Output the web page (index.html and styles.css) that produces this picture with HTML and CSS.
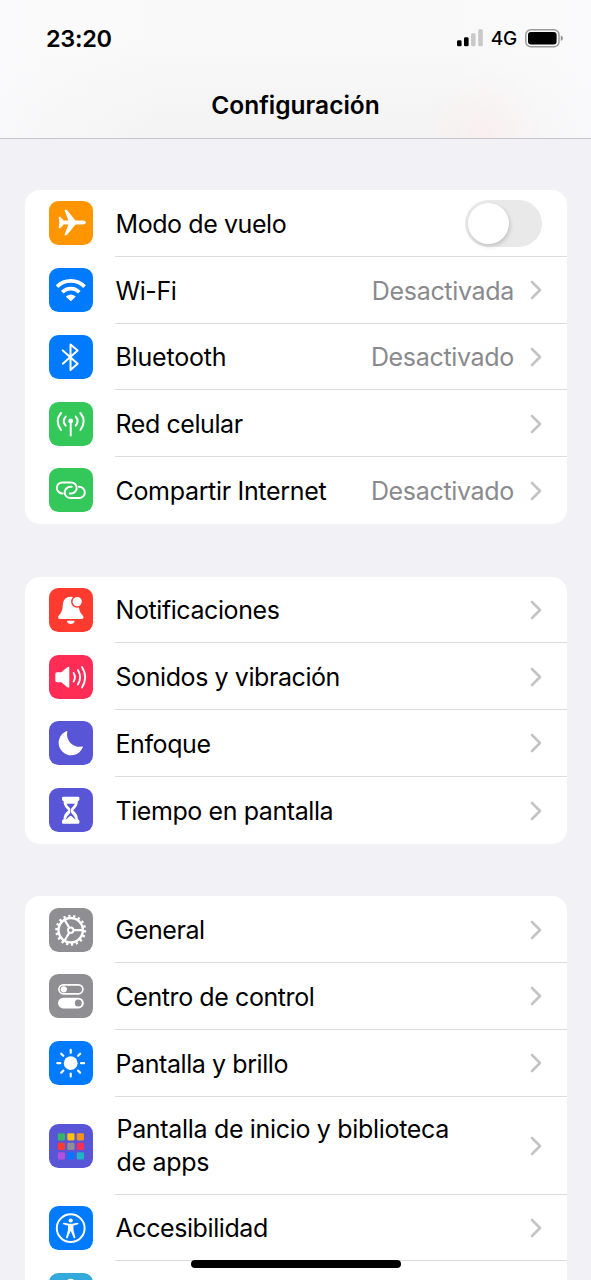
FILE: index.html
```html
<!DOCTYPE html>
<html lang="es">
<head>
<meta charset="utf-8">
<title>Configuración</title>
<link rel="stylesheet" href="styles.css">
</head>
<body>
<div class="screen">
  <header class="header">
    <div class="status">
      <span class="time">23:20</span>
      <div class="status-right">
        <svg class="signal" width="26" height="18" viewBox="0 0 26 18"><rect x="0" y="11.3" width="4.6" height="6" rx="1.4"/><rect x="7" y="8.3" width="4.6" height="9" rx="1.4"/><rect class="dim" x="14" y="4.3" width="4.6" height="13" rx="1.4"/><rect class="dim" x="21.2" y="0.3" width="4.6" height="17" rx="1.4"/></svg>
        <span class="net">4G</span>
        <svg width="39" height="19" viewBox="0 0 39 19"><rect x=".8" y=".8" width="33.2" height="17" rx="5" fill="none" stroke="#9b9b9b" stroke-width="1.5"/><rect x="3" y="3" width="28.6" height="12.6" rx="3" fill="#000"/><path d="M35.8 6.6q2 .8 2 2.7t-2 2.7z" fill="#8e8e8e"/></svg>
      </div>
    </div>
    <h1 class="title">Configuración</h1>
  </header>

  <main class="groups">
    <section class="card">
      <div class="row">
        <svg class="tile orange" viewBox="0 0 44 44"><path fill="#fff" d="M37 21.5c0 1.3-1.6 2-3.4 2h-7.1L18.2 33.8q-.4.5-1 .5h-1.100q-.8 0-.5-.9l3.800-9.900h-4.800l-2.700 3.300q-.3.4-.8.4h-.9q-.6 0-.6-.6l.9-5.100-.9-5.100q0-.6.6-.6h.9q.5 0 .8.4l2.700 3.300h4.800l-3.800-9.900q-.3-.9.5-.9h1.100q.6 0 1 .5l8.300 10.300h7.100c1.800 0 3.400.7 3.400 2z"/></svg>
        <div class="body"><span class="label">Modo de vuelo</span><span class="switch"><i class="knob"></i></span></div>
      </div>
      <div class="row">
        <svg class="tile blue" viewBox="0 0 44 44"><g fill="none" stroke="#fff" stroke-width="3.700"><path d="M8 18.600a19.400 19.400 0 0 1 27.600 0M13.300 24.200a11.700 11.700 0 0 1 17 0"/></g><path fill="#fff" d="M17.200 28.300q4.600-3.800 9.200 0 .4.4 0 .8L22.400 32.700q-.6.5-1.200 0L17.200 29.100q-.4-.4 0-.8z"/></svg>
        <div class="body"><span class="label">Wi-Fi</span><span class="value">Desactivada</span><svg class="chev" viewBox="0 0 12 20"><path d="M2 2l8 8-8 8"/></svg></div>
      </div>
      <div class="row">
        <svg class="tile blue" viewBox="0 0 44 44"><path fill="none" stroke="#fff" stroke-width="2" stroke-linejoin="round" stroke-linecap="round" d="M13.800 15.400L28.600 28.700 21.500 35V9.400l7.100 6-14.800 13.300"/></svg>
        <div class="body"><span class="label blt">Bluetooth</span><span class="value">Desactivado</span><svg class="chev" viewBox="0 0 12 20"><path d="M2 2l8 8-8 8"/></svg></div>
      </div>
      <div class="row">
        <svg class="tile green" viewBox="0 0 44 44"><g fill="none" stroke="#fff" stroke-width="2" stroke-linecap="round"><path d="M21.700 19.500v14M16.700 14.600q-3.800 4.400 0 9M26.700 14.600q3.800 4.400 0 9M12 11q-6.600 8 0 17M31.400 11q6.600 8 0 17"/></g><circle cx="21.700" cy="19" r="2.400" fill="#fff"/></svg>
        <div class="body"><span class="label">Red celular</span><svg class="chev" viewBox="0 0 12 20"><path d="M2 2l8 8-8 8"/></svg></div>
      </div>
      <div class="row">
        <svg class="tile green" viewBox="0 0 44 44"><g fill="none" stroke="#fff" stroke-width="2" stroke-linecap="round"><path d="M13.700 25.400h-.4a5.500 5.500 0 0 1 0-11h8.900a5.500 5.500 0 0 1 0 11h-1.400"/><path d="M29.800 18.800h.4a5.600 5.600 0 0 1 0 11.200h-8.900a5.600 5.600 0 0 1 0-11.200h1.400"/></g></svg>
        <div class="body"><span class="label wide">Compartir Internet</span><span class="value">Desactivado</span><svg class="chev" viewBox="0 0 12 20"><path d="M2 2l8 8-8 8"/></svg></div>
      </div>
    </section>

    <section class="card">
      <div class="row">
        <svg class="tile red" viewBox="0 0 44 44"><path fill="#fff" d="M21.800 8.800c-5 0-7.700 3.500-8 8.200-.3 4.500-.8 6.800-3.400 9.800-.9 1-1.300 1.700-1.300 2.500 0 1 .7 1.600 1.800 1.600h21.800c1.100 0 1.800-.6 1.800-1.600 0-.8-.4-1.500-1.300-2.500-2.600-3-3.100-5.300-3.400-9.800-.3-4.700-3-8.200-8-8.200zM17.900 32.800h7.800q-.7 3.200-3.900 3.200t-3.900-3.200z"/><circle cx="28.200" cy="13.600" r="5.400" fill="#fff" stroke="#ff3b30" stroke-width="1.500"/></svg>
        <div class="body"><span class="label">Notificaciones</span><svg class="chev" viewBox="0 0 12 20"><path d="M2 2l8 8-8 8"/></svg></div>
      </div>
      <div class="row">
        <svg class="tile pink" viewBox="0 0 44 44"><path fill="#fff" d="M8 17.200h4.300l6-5q2-1.300 2 .8v18.400q0 2.100-2 .8l-6-5H8q-1.700 0-1.700-1.700v-6.600q0-1.700 1.700-1.700z"/><g fill="none" stroke="#fff" stroke-width="1.900" stroke-linecap="round"><path d="M24.600 18q2.600 4.200 0 8.400M28.900 15q4.500 7.200 0 14.400M33 12q6.400 10.200 0 20.400"/></g></svg>
        <div class="body"><span class="label">Sonidos y vibración</span><svg class="chev" viewBox="0 0 12 20"><path d="M2 2l8 8-8 8"/></svg></div>
      </div>
      <div class="row">
        <svg class="tile indigo" viewBox="0 0 44 44"><path fill="#fff" d="M17.300 10.200q1.500-.5 1 .8A12.300 12.300 0 0 0 32.800 25.500q1.500-.4.9 1A12.500 12.500 0 1 1 17.300 10.200z"/></svg>
        <div class="body"><span class="label">Enfoque</span><svg class="chev" viewBox="0 0 12 20"><path d="M2 2l8 8-8 8"/></svg></div>
      </div>
      <div class="row">
        <svg class="tile indigo" viewBox="0 0 44 44"><path fill="#fff" fill-rule="evenodd" d="M14.200 8.700h15q1.200 0 1.200 1.300v1.600q0 1.200-1.500 1.400c0 4.300-1.800 6.400-4.800 9.200 3 2.800 4.800 4.900 4.800 9.200q1.500.2 1.500 1.400v1.600q0 1.300-1.200 1.300h-15q-1.200 0-1.200-1.300v-1.600q0-1.200 1.500-1.400c0-4.300 1.800-6.400 4.800-9.200-3-2.800-4.800-4.900-4.800-9.200Q13 12.800 13 11.600V10q0-1.300 1.200-1.300zM17.500 15.800h8.400q-.8 1.700-3.300 4.100-.6.600-.6 1.600v2q0 1.300.7 2 3.300 2.800 4 6-1.700-.9-3.900-3.200-1.100-1.100-2.200 0-2.200 2.300-3.900 3.200.7-3.200 4-6 .7-.7.7-2v-2q0-1-.6-1.600-2.500-2.400-3.300-4.100z"/></svg>
        <div class="body"><span class="label">Tiempo en pantalla</span><svg class="chev" viewBox="0 0 12 20"><path d="M2 2l8 8-8 8"/></svg></div>
      </div>
    </section>

    <section class="card">
      <div class="row">
        <svg class="tile gray" viewBox="0 0 44 44"><g fill="none" stroke="#fff"><circle cx="21.700" cy="22.200" r="12.200" stroke-width="2.400"/><circle cx="21.700" cy="22.200" r="14.200" stroke-width="2.600" pathLength="90" stroke-dasharray="2.300 2.700"/><circle cx="21.700" cy="22.200" r="2.700" stroke-width="1.900"/><path stroke-width="2.200" d="M24.500 22.200h9.500M20.300 19.800l-4.800-8.200M20.300 24.600l-4.800 8.200"/></g></svg>
        <div class="body"><span class="label">General</span><svg class="chev" viewBox="0 0 12 20"><path d="M2 2l8 8-8 8"/></svg></div>
      </div>
      <div class="row">
        <svg class="tile gray" viewBox="0 0 44 44"><rect x="9.900" y="10.800" width="24" height="9" rx="4.500" fill="none" stroke="#fff" stroke-width="1.700"/><circle cx="14.800" cy="15.300" r="3.100" fill="#fff"/><rect x="9" y="23.700" width="25.800" height="10.700" rx="5.300" fill="#fff"/><circle cx="29.300" cy="29" r="3.500" fill="#8e8e93"/></svg>
        <div class="body"><span class="label">Centro de control</span><svg class="chev" viewBox="0 0 12 20"><path d="M2 2l8 8-8 8"/></svg></div>
      </div>
      <div class="row">
        <svg class="tile blue" viewBox="0 0 44 44"><circle cx="21.700" cy="22.200" r="6.900" fill="#fff"/><path stroke="#fff" stroke-width="2.200" stroke-linecap="round" d="M21.700 8.800v3M21.700 32.600v3M8.300 22.200h3M32.100 22.200h3M12.200 12.700l2.100 2.100M29.100 29.600l2.100 2.100M31.200 12.700l-2.100 2.100M14.300 29.600l-2.100 2.100"/></svg>
        <div class="body"><span class="label">Pantalla y brillo</span><svg class="chev" viewBox="0 0 12 20"><path d="M2 2l8 8-8 8"/></svg></div>
      </div>
      <div class="row tall">
        <svg class="tile indigo" viewBox="0 0 44 44"><rect x="8.800" y="9.200" width="7.200" height="7.200" rx="1.300" fill="#34b567"/><rect x="18.300" y="9.200" width="7.200" height="7.200" rx="1.300" fill="#ffc20a"/><rect x="27.800" y="9.200" width="7.200" height="7.200" rx="1.300" fill="#f5921e"/><rect x="8.800" y="18.700" width="7.200" height="7.200" rx="1.300" fill="#ff3b30"/><rect x="18.300" y="18.700" width="7.200" height="7.200" rx="1.300" fill="#8e8e93"/><rect x="27.800" y="18.700" width="7.200" height="7.200" rx="1.300" fill="#fb2d55"/><rect x="8.800" y="28.200" width="7.200" height="7.200" rx="1.300" fill="#af52de"/><rect x="18.300" y="28.200" width="7.200" height="7.200" rx="1.300" fill="#0a74ff"/><rect x="27.800" y="28.200" width="7.200" height="7.200" rx="1.300" fill="#1fb5c4"/></svg>
        <div class="body"><span class="label wide">Pantalla de inicio y biblioteca<br>de apps</span><svg class="chev" viewBox="0 0 12 20"><path d="M2 2l8 8-8 8"/></svg></div>
      </div>
      <div class="row">
        <svg class="tile blue" viewBox="0 0 44 44"><circle cx="21.700" cy="22.200" r="13.900" fill="none" stroke="#fff" stroke-width="2"/><circle cx="21.700" cy="14.500" r="2.100" fill="#fff"/><path fill="#fff" stroke="#fff" stroke-width="1.100" stroke-linejoin="round" d="M14.600 17.300l5.200.9h3.800l5.200-.9.1.4-5 1.500v5l1.900 7.300-.5.200-3.200-7.300h-.8l-3.200 7.300-.5-.2 1.900-7.300v-5l-5-1.500z"/></svg>
        <div class="body"><span class="label">Accesibilidad</span><svg class="chev" viewBox="0 0 12 20"><path d="M2 2l8 8-8 8"/></svg></div>
      </div>
      <div class="row">
        <svg class="tile cyan" viewBox="0 0 44 44"><circle cx="21.700" cy="10.700" r="5" fill="#fff"/></svg>
        <div class="body"></div>
      </div>
    </section>
  </main>
  <div class="home-bar"></div>
</div>
</body>
</html>
```
FILE: styles.css
```css
* { box-sizing: border-box; }
body { margin: 0; background: #f2f1f6; font-family: Inter, "Liberation Sans", sans-serif; color: #000; }
.screen { position: relative; width: 591px; height: 1280px; overflow: hidden; }

.header {
  height: 139px;
  border-bottom: 1px solid #c6c6ca;
  background:
    radial-gradient(ellipse 60px 65px at 484px 136px, rgba(255, 232, 230, .4), rgba(255, 240, 238, 0)),
    linear-gradient(90deg, rgba(250, 250, 252, .8), rgba(250, 250, 252, 0) 28%, rgba(250, 250, 252, 0) 75%, rgba(250, 250, 252, .8)),
    linear-gradient(#f9f9f9 30%, #f3f3f3);
}
.status { display: flex; justify-content: space-between; align-items: center; height: 76px; padding: 0 27px 0 46px; }
.time { font-size: 23.5px; font-weight: 600; letter-spacing: -.3px; }
.status-right { display: flex; align-items: center; }
.signal .dim { fill: #c9c9c9; }
.net { margin: 1px 8px 0 8px; font-size: 19px; font-weight: 450; letter-spacing: -.2px; }
.title { margin: 13px 0 0; text-align: center; font-size: 24.5px; line-height: 32px; font-weight: 600; letter-spacing: 0; }

.groups { display: flex; flex-direction: column; gap: 52.8px; padding: 51px 24.5px 0 24.5px; }
.card { flex: none; border-radius: 15px; background: #fff; overflow: hidden; }
.row { display: flex; align-items: center; height: 66.75px; padding-left: 24px; }
.tall { height: 98px; }
.tile { flex: none; width: 44px; height: 44px; margin-right: 22.5px; border-radius: 9.5px; }
.orange { background: #ff9500; }
.blue { background: #007aff; }
.green { background: #34c759; }
.red { background: #ff3b30; }
.pink { background: #ff2d55; }
.indigo { background: #5856d6; }
.gray { background: #8e8e93; }
.cyan { background: #34aadc; }

.body { display: flex; align-items: center; flex: 1; height: 100%; padding-right: 24.5px; border-bottom: 1px solid #dcdcde; }
.row:last-child .body { border-bottom: 0; }
.label { flex: 1; padding: 3px 0 0 .5px; font-size: 25px; line-height: 33px; letter-spacing: -.42px; white-space: nowrap; }
.blt { letter-spacing: -.2px; }
.wide { letter-spacing: -.32px; }
.tall .label { padding: 2px 0 0 1.5px; }
.value { padding-top: 3px; font-size: 25px; line-height: 33px; letter-spacing: -.32px; color: #8a8a8e; }
.chev { flex: none; width: 12px; height: 20px; margin: 1px 0 0 16px; fill: none; stroke: #c4c4c7; stroke-width: 2.6; stroke-linecap: round; stroke-linejoin: round; }

.switch { width: 77px; height: 47px; margin-top: 1px; padding: 3px; border-radius: 24px; background: #e9e9ea; }
.knob { display: block; width: 41px; height: 41px; border-radius: 50%; background: #fff; box-shadow: 1px 2px 4px rgba(0, 0, 0, .18); }

.home-bar { position: absolute; left: 191px; top: 1260px; width: 210px; height: 8px; border-radius: 4px; background: #000; }
```
